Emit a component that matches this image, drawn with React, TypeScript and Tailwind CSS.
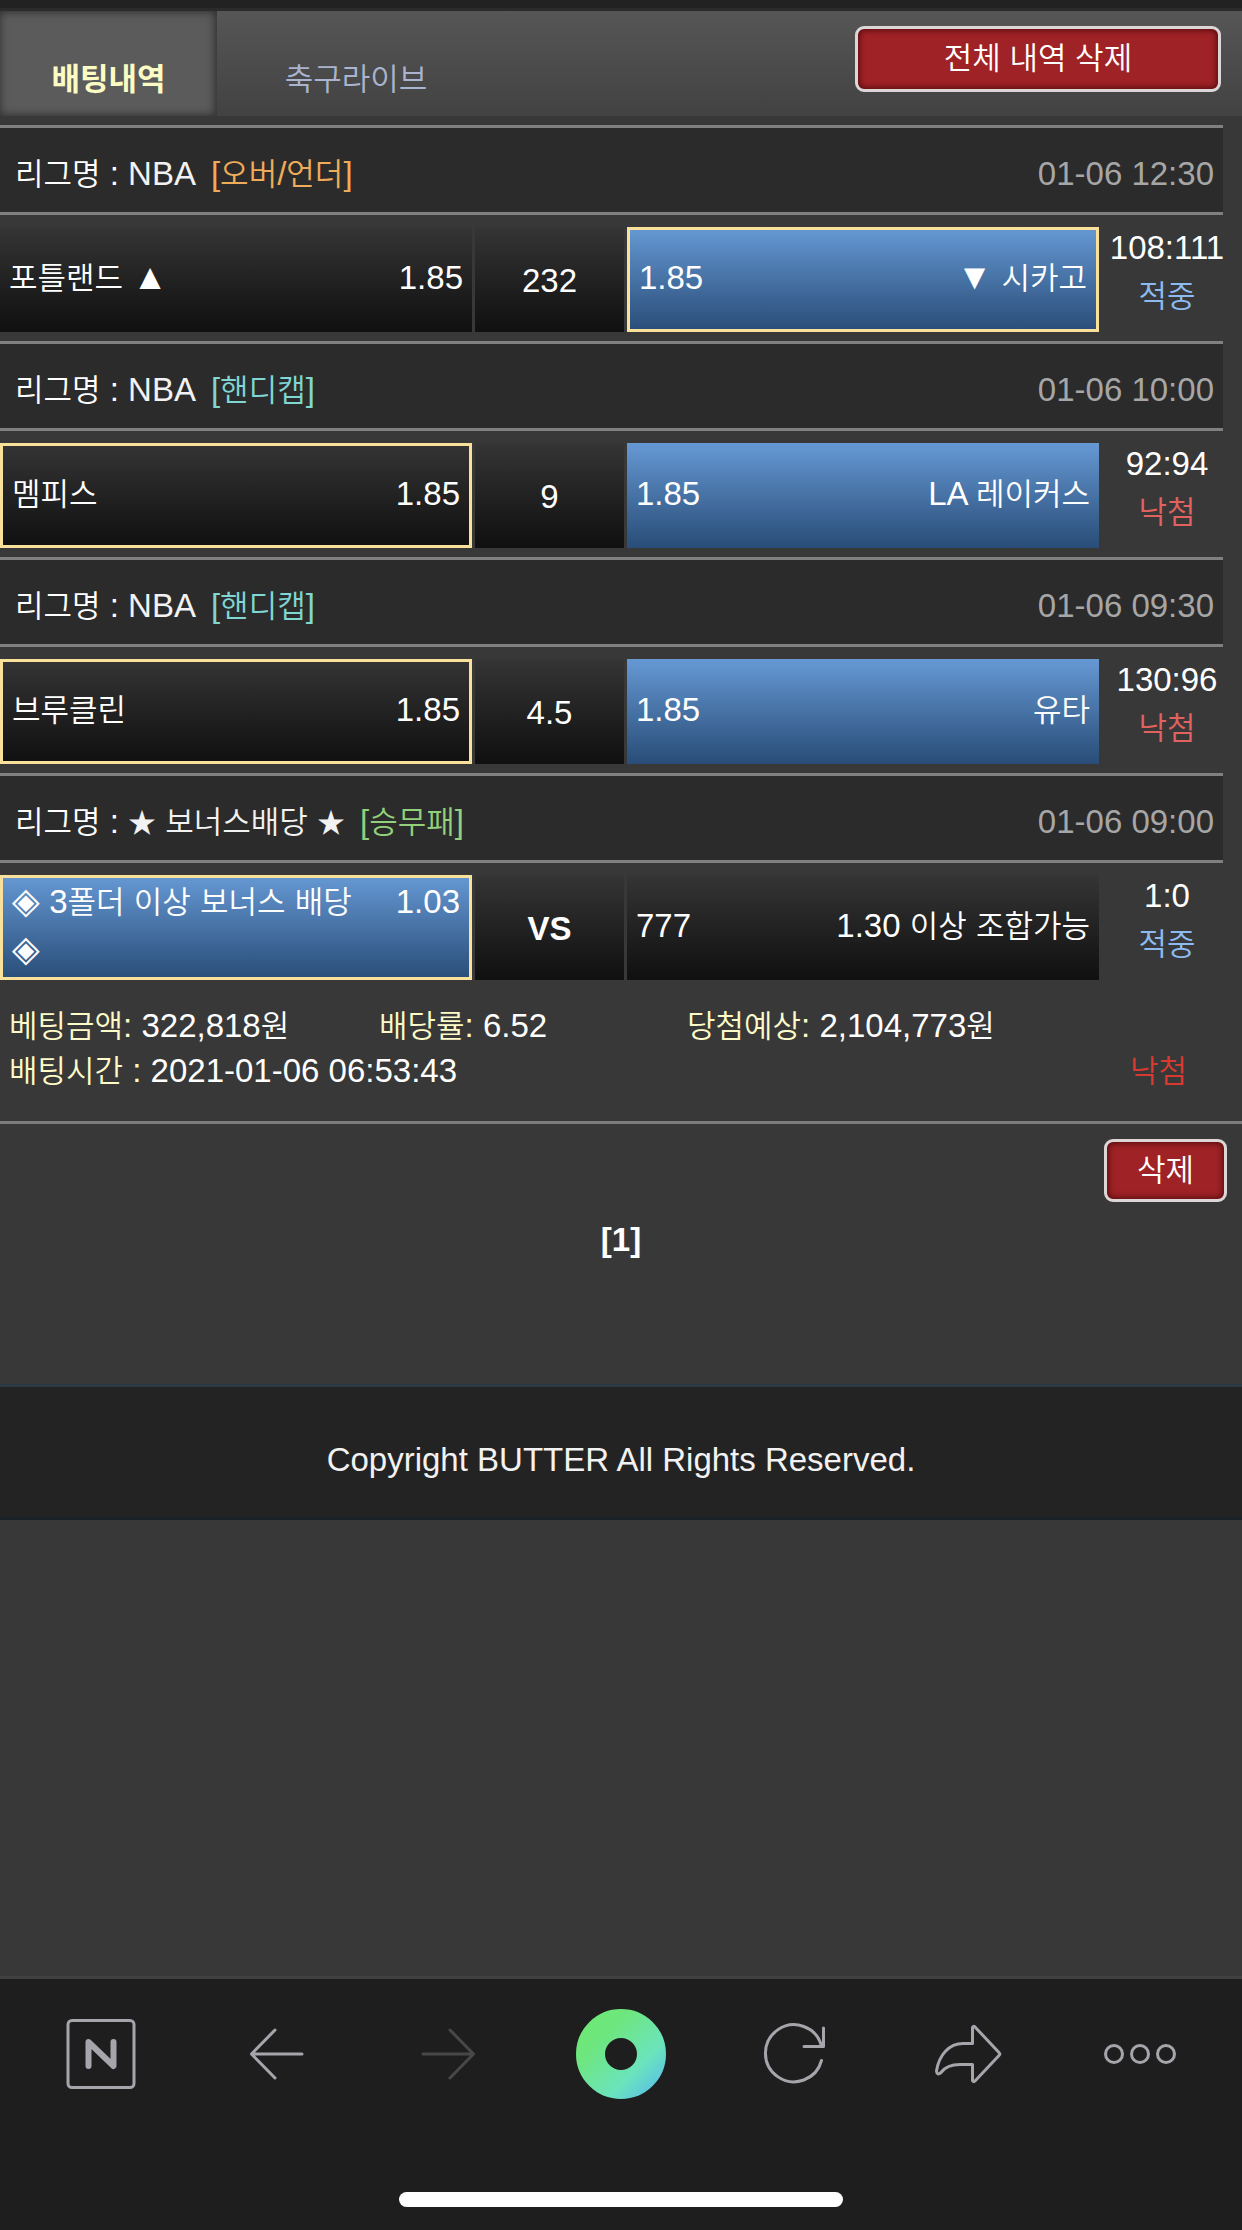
import type { ReactNode } from "react";
import clsx from "clsx";

interface Bet {
  league: string;
  type: string;
  typeColor: string;
  date: string;
  home: string;
  homeOdds: string;
  line: string;
  away: string;
  awayOdds: string;
  pick: "home" | "away";
  blue: "home" | "away";
  score: string;
  win: boolean;
}

const bets: Bet[] = [
  {
    league: "NBA",
    type: "[오버/언더]",
    typeColor: "text-[#eeac5a]",
    date: "01-06 12:30",
    home: "포틀랜드 ▲",
    homeOdds: "1.85",
    line: "232",
    away: "▼ 시카고",
    awayOdds: "1.85",
    pick: "away",
    blue: "away",
    score: "108:111",
    win: true,
  },
  {
    league: "NBA",
    type: "[핸디캡]",
    typeColor: "text-[#7fd6d2]",
    date: "01-06 10:00",
    home: "멤피스",
    homeOdds: "1.85",
    line: "9",
    away: "LA 레이커스",
    awayOdds: "1.85",
    pick: "home",
    blue: "away",
    score: "92:94",
    win: false,
  },
  {
    league: "NBA",
    type: "[핸디캡]",
    typeColor: "text-[#7fd6d2]",
    date: "01-06 09:30",
    home: "브루클린",
    homeOdds: "1.85",
    line: "4.5",
    away: "유타",
    awayOdds: "1.85",
    pick: "home",
    blue: "away",
    score: "130:96",
    win: false,
  },
  {
    league: "★ 보너스배당 ★",
    type: "[승무패]",
    typeColor: "text-[#92d07c]",
    date: "01-06 09:00",
    home: "◈ 3폴더 이상 보너스 배당 ◈",
    homeOdds: "1.03",
    line: "VS",
    away: "1.30 이상 조합가능",
    awayOdds: "777",
    pick: "home",
    blue: "home",
    score: "1:0",
    win: true,
  },
];

// Hangul and symbols don't sit at the same scale as the latin face, so each run gets its own size
function Mixed({ children }: { children: string }) {
  const parts = children.split(/([가-힣]+|★|[◈▲▼])/);
  return (
    <>
      {parts.map((part, i) => {
        if (i % 2 === 0) return part;
        const size = part === "★" ? "text-[28px]" : /[◈▲▼]/.test(part) ? "text-[36px]" : "text-[31px]";
        return (
          <span key={i} className={clsx("leading-none", size)}>
            {part}
          </span>
        );
      })}
    </>
  );
}

function DeleteButton({ children, className }: { children: string; className: string }) {
  return (
    <button
      type="button"
      className={clsx(
        "flex items-center justify-center rounded-[9px] border-[3px] border-[#dcd6d6] bg-[#9f2226] text-[31px] text-white shadow-[inset_0_0_6px_1px_rgba(50,0,5,0.75)]",
        className
      )}
    >
      {children}
    </button>
  );
}

interface CellProps {
  picked?: boolean;
  blue?: boolean;
  className?: string;
  children: ReactNode;
}

function Cell({ picked, blue, className, children }: CellProps) {
  return (
    <div
      className={clsx(
        "mt-[3px] flex h-[105px] min-w-0 items-center bg-linear-to-b bg-origin-border px-[9px]",
        blue ? "from-[#6699d4] to-[#294d78]" : "from-[#353535] to-[#101010]",
        picked && "border-[3px] border-[#f9e09b]",
        className
      )}
    >
      {children}
    </div>
  );
}

function BetRow({ bet }: { bet: Bet }) {
  return (
    <section>
      <header className="mr-[19px] flex h-[90px] items-center justify-between border-y-[3px] border-[#808080] bg-[#2b2b2b] pt-2 pr-[9px] pl-[15px]">
        <h2>
          <Mixed>{"리그명 : "}</Mixed>
          <span className="text-[#f2f2f2]">
            <Mixed>{bet.league}</Mixed>
          </span>
          <span className={clsx("ml-[15px]", bet.typeColor)}>
            <Mixed>{bet.type}</Mixed>
          </span>
        </h2>
        <time className="text-[#a6a6a6]">{bet.date}</time>
      </header>

      <div className="mr-[7px] flex items-start py-[9px]">
        <div className="grid flex-1 grid-cols-[472fr_149fr_472fr] gap-[3px]">
          <Cell picked={bet.pick === "home"} blue={bet.blue === "home"} className="pb-1">
            <div className="flex w-full items-start justify-between gap-9">
              <span>
                <Mixed>{bet.home}</Mixed>
              </span>
              <span>{bet.homeOdds}</span>
            </div>
          </Cell>
          <Cell className={clsx("justify-center pt-0.5", bet.line === "VS" && "font-bold")}>
            {bet.line}
          </Cell>
          <Cell picked={bet.pick === "away"} blue={bet.blue === "away"} className="pb-1">
            <div className="flex w-full items-start justify-between gap-9">
              <span>{bet.awayOdds}</span>
              <span>
                <Mixed>{bet.away}</Mixed>
              </span>
            </div>
          </Cell>
        </div>
        <div className="w-[136px] text-center">
          <p>{bet.score}</p>
          <p className={bet.win ? "text-[#8dbbf0]" : "text-[#e2625f]"}>
            <Mixed>{bet.win ? "적중" : "낙첨"}</Mixed>
          </p>
        </div>
      </div>
    </section>
  );
}

function Field({ label, value }: { label: string; value: string }) {
  return (
    <p>
      <span className="text-[#fdfbc8]">
        <Mixed>{label}</Mixed>
      </span>{" "}
      <Mixed>{value}</Mixed>
    </p>
  );
}

interface ToolProps {
  label: string;
  disabled?: boolean;
  children: ReactNode;
}

function Tool({ label, disabled, children }: ToolProps) {
  return (
    <button
      type="button"
      aria-label={label}
      disabled={disabled}
      className={clsx("flex flex-1 justify-center", disabled ? "text-[#48484a]" : "text-[#a5a5ab]")}
    >
      <svg
        viewBox="0 0 90 90"
        className="h-[90px] w-[90px]"
        fill="none"
        stroke="currentColor"
        strokeWidth="3"
        strokeLinecap="round"
        strokeLinejoin="round"
      >
        {children}
      </svg>
    </button>
  );
}

function Toolbar() {
  return (
    <nav className="flex h-[254px] flex-col items-center justify-between border-t-[3px] border-[#414143] bg-[#1e1e1e] pt-[30px] pb-[23px]">
      <div className="flex w-full px-4">
        <Tool label="홈">
          <rect x="11" y="11.5" width="66" height="67" rx="4" />
          <path d="M31.5 57V33L56.5 57V33" strokeWidth="6" />
        </Tool>
        <Tool label="뒤로">
          <path d="M72 45H22M45 21L21.500 45L45 69" />
        </Tool>
        <Tool label="앞으로" disabled>
          <path d="M20 45H70M47 21L70.500 45L47 69" />
        </Tool>
        <Tool label="그린닷">
          <defs>
            <linearGradient id="dot" gradientUnits="userSpaceOnUse" x1="14" y1="14" x2="80" y2="80">
              <stop offset="0" stopColor="#6ee878" />
              <stop offset="0.2" stopColor="#6ee67e" />
              <stop offset="0.7" stopColor="#6be4bc" />
              <stop offset="1" stopColor="#5cc4e0" />
            </linearGradient>
          </defs>
          <circle cx="45" cy="45" r="30.500" stroke="url(#dot)" strokeWidth="29" />
        </Tool>
        <Tool label="새로고침">
          <path d="M72.500 51.500A28.500 28.500 0 1 1 72.500 37" />
          <path d="M74.500 19V37.500H55" />
        </Tool>
        <Tool label="공유">
          <path d="M50.500 34.500V18.500Q51.500 16.500 53 18L77 43.500Q78.500 45 77 46.500L53 72Q51.500 73.500 50.500 71.500V55.500H38C29 55.500 23 58 19 63.500Q15 67 14.500 62C17 46 27 34.500 41 34.500Z" />
        </Tool>
        <Tool label="더보기">
          <circle cx="19" cy="45" r="8.500" />
          <circle cx="45" cy="45" r="8.500" />
          <circle cx="71" cy="45" r="8.500" />
        </Tool>
      </div>
      <div className="h-[15px] w-[444px] rounded-full bg-white" />
    </nav>
  );
}

export default function App() {
  return (
    <div className="flex min-h-screen flex-col bg-[#383838] font-['Liberation_Sans','Noto_Sans_CJK_KR',sans-serif] text-[33px] leading-[48px] font-[350] text-white">
      <div className="h-[11px] border-b-[3px] border-[#2b2b2b] bg-[#222222]" />
      <nav className="flex h-[105px] items-start bg-linear-to-b from-[#565656] to-[#424242]">
        <a
          href="#bets"
          className="flex h-full w-[217px] items-center justify-center bg-[#5b5b5b] pt-8 font-bold text-[#fbfcc4] shadow-[inset_-1px_0_8px_1px_rgba(0,0,0,0.5)]"
        >
          <Mixed>배팅내역</Mixed>
        </a>
        <a href="#live" className="flex h-full w-[278px] items-center justify-center pt-8 text-[#aab4cf]">
          <Mixed>축구라이브</Mixed>
        </a>
        <DeleteButton className="mt-[15px] mr-[21px] ml-auto h-[66px] w-[366px]">
          전체 내역 삭제
        </DeleteButton>
      </nav>

      <main className="mt-[9px] flex-1">
        {bets.map((bet) => (
          <BetRow key={bet.date} bet={bet} />
        ))}

        <div className="border-b-[3px] border-[#7c7c7c] pt-[14px] pb-[28px] pl-[9px] leading-[45px]">
          <div className="grid grid-cols-[370fr_308fr_555fr]">
            <Field label="베팅금액:" value="322,818원" />
            <Field label="배당률:" value="6.52" />
            <Field label="당첨예상:" value="2,104,773원" />
          </div>
          <div className="flex justify-between pr-[55px]">
            <Field label="배팅시간 :" value="2021-01-06 06:53:43" />
            <p className="text-[#d93a30]">
              <Mixed>낙첨</Mixed>
            </p>
          </div>
        </div>

        <DeleteButton className="mt-[15px] mr-[15px] ml-auto h-[63px] w-[123px]">삭제</DeleteButton>

        <p className="mt-[14px] text-center font-bold">[1]</p>

        <footer className="mt-[120px] border-t-[3px] border-b-[3px] border-t-[#2d3a46] border-b-[#1a2127] bg-[#232323] pt-[49px] pb-[33px] text-center text-[#f2f2f2]">
          Copyright BUTTER All Rights Reserved.
        </footer>
      </main>

      <Toolbar />
    </div>
  );
}
